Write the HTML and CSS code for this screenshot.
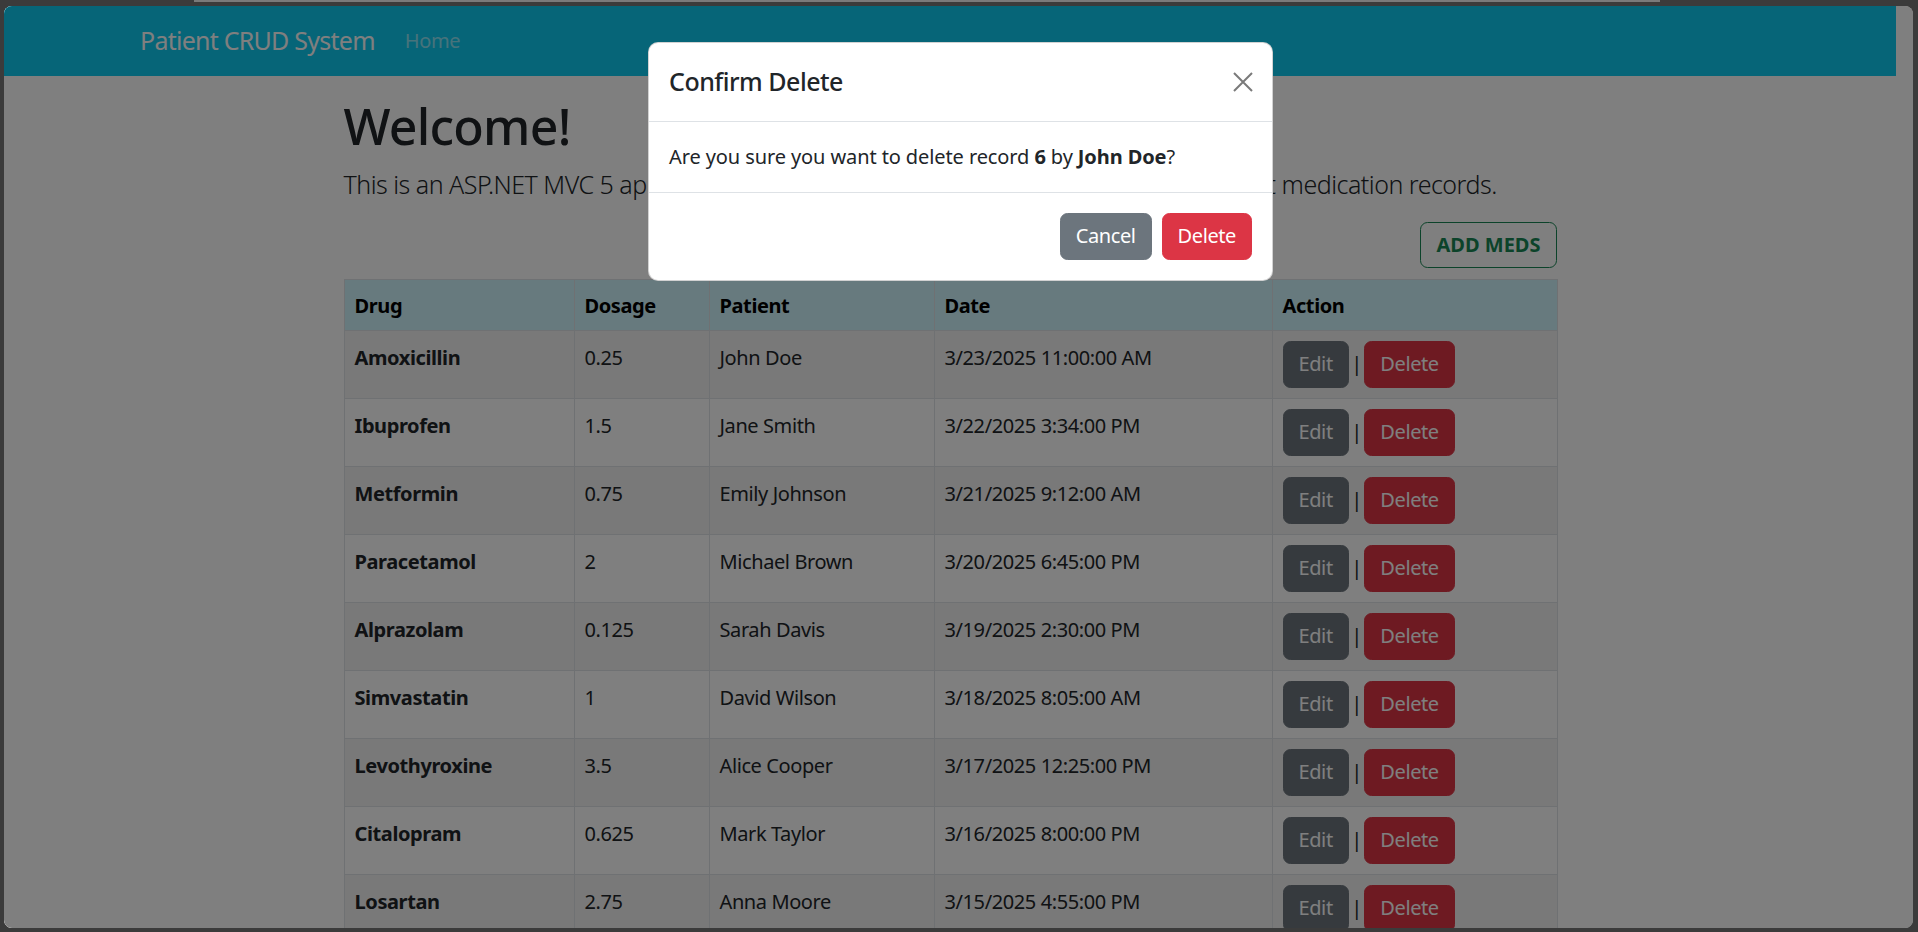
FILE: index.html
```html
<!DOCTYPE html>
<html lang="en">
<head>
<meta charset="utf-8">
<title>Patient CRUD System</title>
<link rel="stylesheet" href="styles.css">
</head>
<body>
<div class="topband"><div class="tabline"></div></div>
<div class="window">
  <div class="page">
    <nav class="navbar">
      <div class="nav-inner">
        <a class="brand" href="#">Patient CRUD System</a>
        <a class="nav-link" href="#">Home</a>
      </div>
    </nav>
    <main class="content">
      <h1 class="title">Welcome!</h1>
      <p class="lead">This is an ASP.NET MVC 5 application written to create, read, update and delete patient medication records.</p>
      <div class="toolbar"><a class="btn btn-outline-success" href="#">ADD MEDS</a></div>
      <table class="meds">
        <colgroup><col class="c1"><col class="c2"><col class="c3"><col class="c4"><col class="c5"></colgroup>
        <thead><tr><th>Drug</th><th>Dosage</th><th>Patient</th><th>Date</th><th>Action</th></tr></thead>
        <tbody>
          <tr><td class="drug">Amoxicillin</td><td>0.25</td><td>John Doe</td><td>3/23/2025 11:00:00 AM</td><td class="act"><div class="actions"><a class="btn btn-secondary" href="#">Edit</a><span class="sep">|</span><a class="btn btn-danger" href="#">Delete</a></div></td></tr>
          <tr><td class="drug">Ibuprofen</td><td>1.5</td><td>Jane Smith</td><td>3/22/2025 3:34:00 PM</td><td class="act"><div class="actions"><a class="btn btn-secondary" href="#">Edit</a><span class="sep">|</span><a class="btn btn-danger" href="#">Delete</a></div></td></tr>
          <tr><td class="drug">Metformin</td><td>0.75</td><td>Emily Johnson</td><td>3/21/2025 9:12:00 AM</td><td class="act"><div class="actions"><a class="btn btn-secondary" href="#">Edit</a><span class="sep">|</span><a class="btn btn-danger" href="#">Delete</a></div></td></tr>
          <tr><td class="drug">Paracetamol</td><td>2</td><td>Michael Brown</td><td>3/20/2025 6:45:00 PM</td><td class="act"><div class="actions"><a class="btn btn-secondary" href="#">Edit</a><span class="sep">|</span><a class="btn btn-danger" href="#">Delete</a></div></td></tr>
          <tr><td class="drug">Alprazolam</td><td>0.125</td><td>Sarah Davis</td><td>3/19/2025 2:30:00 PM</td><td class="act"><div class="actions"><a class="btn btn-secondary" href="#">Edit</a><span class="sep">|</span><a class="btn btn-danger" href="#">Delete</a></div></td></tr>
          <tr><td class="drug">Simvastatin</td><td>1</td><td>David Wilson</td><td>3/18/2025 8:05:00 AM</td><td class="act"><div class="actions"><a class="btn btn-secondary" href="#">Edit</a><span class="sep">|</span><a class="btn btn-danger" href="#">Delete</a></div></td></tr>
          <tr><td class="drug">Levothyroxine</td><td>3.5</td><td>Alice Cooper</td><td>3/17/2025 12:25:00 PM</td><td class="act"><div class="actions"><a class="btn btn-secondary" href="#">Edit</a><span class="sep">|</span><a class="btn btn-danger" href="#">Delete</a></div></td></tr>
          <tr><td class="drug">Citalopram</td><td>0.625</td><td>Mark Taylor</td><td>3/16/2025 8:00:00 PM</td><td class="act"><div class="actions"><a class="btn btn-secondary" href="#">Edit</a><span class="sep">|</span><a class="btn btn-danger" href="#">Delete</a></div></td></tr>
          <tr><td class="drug">Losartan</td><td>2.75</td><td>Anna Moore</td><td>3/15/2025 4:55:00 PM</td><td class="act"><div class="actions"><a class="btn btn-secondary" href="#">Edit</a><span class="sep">|</span><a class="btn btn-danger" href="#">Delete</a></div></td></tr>
        </tbody>
      </table>
    </main>
  </div>
  <div class="backdrop"></div>
  <div class="modal">
    <div class="modal-header">
      <h5 class="modal-title">Confirm Delete</h5>
      <button class="btn-close" type="button" aria-label="Close">
        <svg width="20" height="20" viewBox="0 0 20 20"><path d="M1 1L19 19M19 1L1 19" stroke="#7a7a7a" stroke-width="2" fill="none"/></svg>
      </button>
    </div>
    <div class="modal-body">Are you sure you want to delete record <b>6</b> by <b>John Doe</b>?</div>
    <div class="modal-footer">
      <button class="btn btn-secondary" type="button">Cancel</button>
      <button class="btn btn-danger" type="button">Delete</button>
    </div>
  </div>
</div>
</body>
</html>
```
FILE: styles.css
```css
* { box-sizing: border-box; }
html, body { margin: 0; padding: 0; }
body {
  width: 1918px;
  height: 932px;
  overflow: hidden;
  background: #3b3b3b;
  font-family: "Noto Sans", "Open Sans", sans-serif;
  font-size: 20px;
  line-height: 1.5;
  letter-spacing: -0.02em;
  color: #212529;
}
.topband { height: 6px; position: relative; }
.tabline { position: absolute; left: 194px; width: 1466px; top: 0; height: 2px; background: #7a7a7a; }
.window {
  position: relative;
  margin-left: 4px;
  width: 1909px;
  height: 922px;
  border-radius: 8px;
  overflow: hidden;
  background: #fff;
}
.page { width: 1892px; height: 100%; overflow: hidden; background: #fff; }
.navbar { background: #0dcaf0; height: 70px; display: flex; align-items: center; }
.nav-inner { width: 1650px; margin: 0 auto; padding: 0 15px; display: flex; align-items: center; }
.brand { color: #fff; text-decoration: none; font-size: 25px; line-height: 37.5px; margin-right: 20px; letter-spacing: -0.03em; }
.nav-link { color: rgba(255,255,255,.55); text-decoration: none; padding: 0 10px; font-size: 20px; }
.content { width: 1213px; margin: 0 auto; display: flex; flex-direction: column; }
.title { margin: 20px 0 0; font-size: 50px; font-weight: 500; line-height: 60px; color: #212529; letter-spacing: -0.015em; }
.lead { margin: 10px 0 0; font-size: 25px; font-weight: 300; line-height: 37.5px; letter-spacing: -0.02em; }
.toolbar { display: flex; justify-content: flex-end; margin-top: 18px; }
.btn {
  display: inline-block;
  font-family: inherit;
  font-size: 20px;
  line-height: 30px;
  letter-spacing: -0.02em;
  padding: 7.5px 15px;
  border: 1px solid transparent;
  border-radius: 7.5px;
  text-decoration: none;
  cursor: pointer;
}
.btn-outline-success { color: #198754; border-color: #198754; font-weight: 700; padding: 7px 15px; letter-spacing: 0; }
.btn-secondary { background: #6c757d; border-color: #6c757d; color: #fff; }
.btn-danger { background: #dc3545; border-color: #dc3545; color: #fff; }
.meds { margin-top: 11px; width: 1213px; border-collapse: collapse; table-layout: fixed; }
.c1 { width: 230px; } .c2 { width: 135px; } .c3 { width: 225px; } .c4 { width: 338px; } .c5 { width: 285px; }
.meds th, .meds td { border: 1px solid #dee2e6; padding: 12px 10px 8px; text-align: left; vertical-align: top; line-height: 30px; }
.meds th { padding: 11px 10px 9px; }
.meds td.act { padding: 10px; }
.meds thead th { background: #cff4fc; color: #000; font-weight: 700; }
.meds tbody tr:nth-child(odd) td { background: #f2f2f2; }
.drug { font-weight: 700; }
.actions { display: flex; align-items: center; }
.sep { padding: 0 2.5px; }
.backdrop { position: absolute; inset: 0; background: rgba(0,0,0,.5); }
.modal {
  position: absolute;
  left: 644px;
  top: 36px;
  width: 625px;
  background: #fff;
  border: 1px solid rgba(0,0,0,.175);
  border-radius: 10px;
}
.modal-header { display: flex; align-items: center; justify-content: space-between; padding: 20px; border-bottom: 1px solid #dee2e6; }
.modal-title { margin: 0; font-size: 25px; font-weight: 500; line-height: 37.5px; letter-spacing: -0.02em; }
.btn-close { width: 30px; height: 30px; padding: 5px; margin-right: -6px; border: 0; background: transparent; display: flex; }
.modal-body { padding: 20px; letter-spacing: -0.005em; }
.modal-footer { display: flex; justify-content: flex-end; padding: 15px; border-top: 1px solid #dee2e6; }
.modal-footer .btn { margin: 5px; }
```
